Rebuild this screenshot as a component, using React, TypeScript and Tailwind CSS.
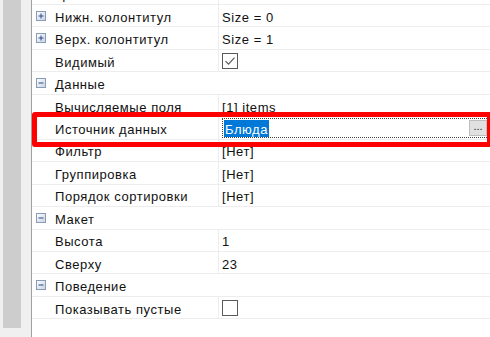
import React from "react";

type Row =
  | { kind: "cat"; label: string }
  | { kind: "prop"; label: string; value?: string; expand?: boolean; check?: boolean; swatch?: boolean; selected?: boolean };

const rows: Row[] = [
  { kind: "prop", label: "Цвет", value: "#8080C0", swatch: true },
  { kind: "prop", label: "Нижн. колонтитул", value: "Size = 0", expand: true },
  { kind: "prop", label: "Верх. колонтитул", value: "Size = 1", expand: true },
  { kind: "prop", label: "Видимый", check: true },
  { kind: "cat", label: "Данные" },
  { kind: "prop", label: "Вычисляемые поля", value: "[1] items" },
  { kind: "prop", label: "Источник данных", value: "Блюда", selected: true },
  { kind: "prop", label: "Фильтр", value: "[Нет]" },
  { kind: "prop", label: "Группировка", value: "[Нет]" },
  { kind: "prop", label: "Порядок сортировки", value: "[Нет]" },
  { kind: "cat", label: "Макет" },
  { kind: "prop", label: "Высота", value: "1" },
  { kind: "prop", label: "Сверху", value: "23" },
  { kind: "cat", label: "Поведение" },
  { kind: "prop", label: "Показывать пустые", check: false },
];

function ExpandBox({ open }: { open: boolean }) {
  return (
    <svg width="10" height="10" viewBox="0 0 10 10" aria-hidden>
      <defs>
        <linearGradient id="eb" x1="0" y1="0" x2="1" y2="1">
          <stop offset="0" stopColor="#ffffff" />
          <stop offset="1" stopColor="#c6d2e4" />
        </linearGradient>
      </defs>
      <rect x="0.5" y="0.5" width="9" height="9" fill="url(#eb)" stroke="#8a9bb5" />
      <path d="M2.5 5h5" stroke="#2c4a86" strokeWidth="1" />
      {!open && <path d="M5 2.5v5" stroke="#2c4a86" strokeWidth="1" />}
    </svg>
  );
}

function CheckBox({ checked }: { checked: boolean }) {
  return (
    <div className="w-[16px] h-[16px] border border-[#5a5a5a] bg-white flex items-center justify-center">
      {checked && (
        <svg width="12" height="12" viewBox="0 0 12 12" aria-hidden>
          <path d="M1.5 6.2l3 3 6-6.5" fill="none" stroke="#5a5a5a" strokeWidth="1.2" />
        </svg>
      )}
    </div>
  );
}

export default function App() {
  return (
    <div className="relative w-[490px] h-[337px] overflow-hidden bg-white flex text-[13px] tracking-[0.55px] text-[#111] font-['Liberation_Sans',Arial,sans-serif]">
      {/* left frame strip */}
      <div className="flex h-full shrink-0">
        <div className="w-[3px] bg-[#f0f0f0]" />
        <div className="w-[18px] flex flex-col">
          <div className="h-[328px] bg-[#cdcdcd]" />
          <div className="flex-1 bg-[#f0f0f0]" />
        </div>
        <div className="w-[10px] bg-[#f0f0f0]" />
        <div className="w-[1px] bg-[#a0a0a0]" />
      </div>

      {/* property grid */}
      <div className="flex-1 flex flex-col mt-[-17.46px]">
        {rows.map((r, i) => (
          <div key={i} className="h-[22.46px] shrink-0 flex border-b border-[#ededed] leading-none">
            <div className="w-[23px] shrink-0 flex items-center pl-[4px]">
              {r.kind === "cat" && <ExpandBox open />}
              {r.kind === "prop" && r.expand && <ExpandBox open={false} />}
            </div>
            {r.kind === "cat" ? (
              <div className="flex-1 flex items-center pt-[3px]">{r.label}</div>
            ) : (
              <>
                <div className="w-[164px] shrink-0 flex items-center pt-[3px] border-r border-[#ededed] whitespace-nowrap">
                  {r.label}
                </div>
                <div className="flex-1 flex items-center pl-[3px] whitespace-nowrap">
                  {r.swatch && (
                    <>
                      <div className="w-[18px] h-[12px] bg-[#a6a6dc] border border-[#7a7aa8] mr-[3px]" />
                      <span className="pt-[3px]">{r.value}</span>
                    </>
                  )}
                  {r.check !== undefined && <CheckBox checked={r.check} />}
                  {r.selected && (
                    <div className="flex-1 h-[20px] mt-[1px] mr-[1px] border border-dotted border-[#404040] flex items-center pl-[1px] pr-[1px]">
                      <span className="bg-[#0078d7] text-white h-[17px] flex items-center pt-[2px] px-[1px]">{r.value}</span>
                      <div className="ml-auto w-[18px] h-[16px] bg-[#e1e1e1] border border-[#bdbdbd] flex items-center justify-center text-[11px] tracking-normal text-[#222] pb-[4px]">
                        ...
                      </div>
                    </div>
                  )}
                  {!r.swatch && !r.selected && r.check === undefined && <span className="pt-[3px]">{r.value}</span>}
                </div>
              </>
            )}
          </div>
        ))}
      </div>

      {/* red highlight overlay */}
      <div className="absolute left-[32px] top-[112px] w-[460px] h-[35px] border-[5px] border-[#ff0000] rounded-[3px] pointer-events-none" />
    </div>
  );
}
